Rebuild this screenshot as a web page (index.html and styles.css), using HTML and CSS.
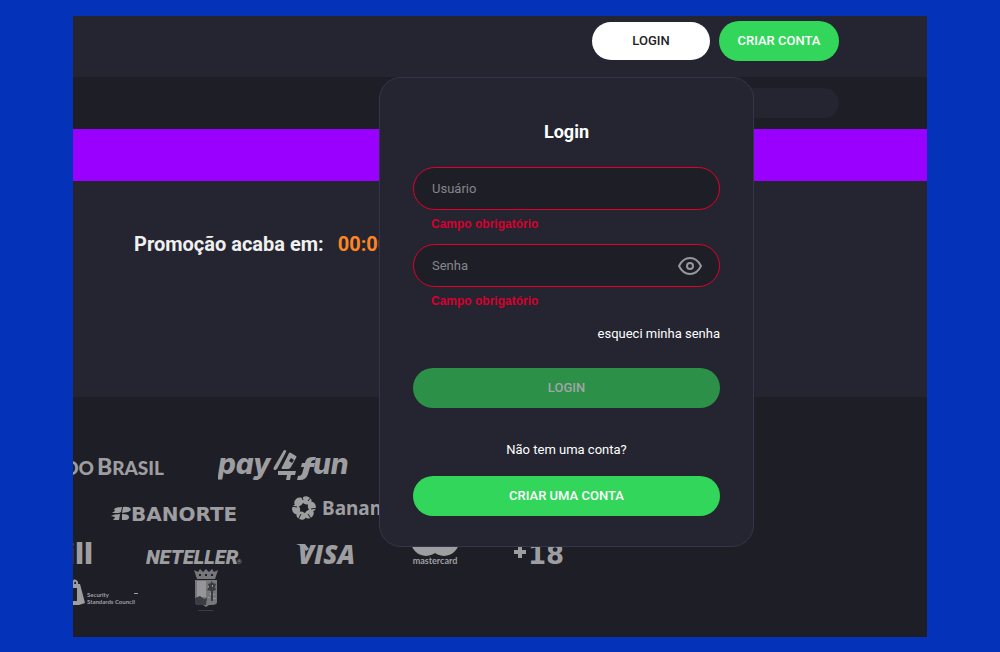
FILE: index.html
```html
<!DOCTYPE html>
<html lang="pt-BR">
<head>
    <meta charset="UTF-8">
    <meta name="viewport" content="width=device-width, initial-scale=1.0">
    <title>Login</title>
    <link rel="stylesheet" href="styles.css">
</head>
<body>

    <div class="page">
        <!-- Top bar -->
        <header class="header">
            <button type="button" class="btn btn-white">LOGIN</button>
            <button type="button" class="btn btn-green btn-top">CRIAR CONTA</button>
        </header>

        <nav class="subnav">
            <input type="search" class="search" aria-label="Buscar">
        </nav>

        <div class="banner"></div>

        <main class="promo">
            <h1 class="promo-title">Promoção acaba em:</h1>
            <span class="promo-time">00:00:00</span>
        </main>

        <!-- Payment logos -->
        <footer class="footer">
            <div class="logos">
                <svg class="logo" width="91" height="44" viewBox="0 0 91 44" role="img" aria-label="Banco do Brasil">
                    <text class="brasil" x="21" y="31" text-anchor="end">DO</text>
                    <text class="brasil" x="91" y="31" text-anchor="end"><tspan class="brasil-big">B</tspan>RASIL</text>
                </svg>
                <svg class="logo" width="132" height="44" viewBox="0 0 132 44" role="img" aria-label="pay4fun">
                    <text class="payfun" x="0" y="30">pay</text>
                    <path d="M66 6q3 0 2 2L59 25q-1 1-3 1-1-1 0-3z"/>
                    <path d="M71 9q1-1 2 0l5 3q1 1 0 2l-5 9q-1 2-3 2h-6q-1-1 0-2z"/>
                    <path class="cut" d="M73 14l3 2-2 3-3-2z"/>
                    <path d="M60 27h18l-1 4h-4l-1 5h-4l1-5h-9z"/>
                    <path d="M98 13h-4q-6 0-7 6h-3l-1 4h3l-2 7q-1 2-4 2l-1 4h3q6 0 8-6l2-7h4l1-4h-4q0-3 4-3z"/>
                    <text class="payfun" x="95" y="30">un</text>
                </svg>
            </div>

            <div class="logos logos-indent">
                <svg class="logo" width="127" height="44" viewBox="0 0 127 44" role="img" aria-label="Banorte">
                    <path d="M3 21q2-2 8-2l-1 5-2 1H1l3-2zM12 19q6-1 8 2 0 2-3 3l-6 1zM0 28q3-2 9-2l-1 6H2q2-2 2-3zM11 26q8 0 7 4-1 2-3 2h-4z"/>
                    <text class="banorte" x="20" y="33">BANORTE</text>
                </svg>
                <svg class="logo" width="120" height="44" viewBox="0 0 120 44" role="img" aria-label="Banamex">
                    <ellipse cx="14" cy="12" rx="5" ry="4" transform="rotate(20 14 20)"/>
                    <ellipse cx="14" cy="12" rx="5" ry="4" transform="rotate(80 14 20)"/>
                    <ellipse cx="14" cy="12" rx="5" ry="4" transform="rotate(140 14 20)"/>
                    <ellipse cx="14" cy="12" rx="5" ry="4" transform="rotate(200 14 20)"/>
                    <ellipse cx="14" cy="12" rx="5" ry="4" transform="rotate(260 14 20)"/>
                    <ellipse cx="14" cy="12" rx="5" ry="4" transform="rotate(320 14 20)"/>
                    <path class="gaps" d="M11 6l2 6M22 8l-4 5M28 20l-7 1M22 32l-4-6M8 32l3-6M1 18l6 1"/>
                    <text class="banamex" x="32" y="27">Banamex</text>
                </svg>
            </div>

            <div class="logos logos-short">
                <svg class="logo" width="19" height="36" viewBox="0 0 19 36" role="img" aria-label="Skrill">
                    <text class="skrill" x="20" y="32" text-anchor="end">Skrill</text>
                </svg>
                <svg class="logo" width="96" height="36" viewBox="0 0 96 36" role="img" aria-label="Neteller">
                    <text class="neteller" x="0" y="32">NETELLER</text>
                    <text class="mark" x="91" y="32">®</text>
                </svg>
                <svg class="logo" width="60" height="36" viewBox="0 0 60 36" role="img" aria-label="Visa">
                    <path d="M0 12h9l4 5-3 2q-3-5-10-7z"/>
                    <text class="visa" x="2" y="32">VISA</text>
                </svg>
                <svg class="logo" width="50" height="36" viewBox="0 0 50 36" role="img" aria-label="mastercard">
                    <circle cx="16" cy="9" r="15"/>
                    <circle cx="34" cy="9" r="15"/>
                    <text class="mastercard" x="25" y="32" text-anchor="middle">mastercard</text>
                </svg>
                <svg class="logo" width="52" height="36" viewBox="0 0 52 36" role="img" aria-label="+18">
                    <path d="M4 14h4v4h4v4H8v4H4v-4H0v-4h4z"/>
                    <text class="adult" x="14" y="32">18</text>
                </svg>
            </div>

            <div class="logos">
                <svg class="logo" width="66" height="44" viewBox="0 0 66 44" role="img" aria-label="PCI Security Standards Council">
                    <path d="M0 16h7l5 19-6 2H0z"/>
                    <path class="cut" d="M0 20h4v13H0z"/>
                    <path class="shackle" d="M0 16q1-6 4-2v4"/>
                    <text class="pci" x="14" y="29">Security</text>
                    <text class="pci" x="14" y="36">Standards Council</text>
                    <path d="M61 25h4v1h-4z"/>
                </svg>
                <svg class="logo" width="26" height="44" viewBox="0 0 26 44" role="img" aria-label="Brasão">
                    <path class="crest" d="M1 2l4 2 2-3 3 3 3-3 3 3 3-3 2 3 4-2-3 9H4z"/>
                    <path class="cut" d="M6 6h2v2H6zM12 6h2v2h-2zM18 6h2v2h-2z"/>
                    <path class="crest" d="M2 12h22v22q0 3-5 3h-3l-3 2-3-2H7q-5 0-5-3z"/>
                    <path class="crest-light" d="M4 13h9v16H4z"/>
                    <path class="crest-dark" d="M2 30l5-2 4 3 3-1-1 7H7q-5 0-5-3zM18 13l2 2 3 1-1 3 1 3-3 1v10h-2V23l-4-1 2-3-1-3 3-1z"/>
                    <path class="crest-light" d="M17 25h1v2h-1zM20 26h2v1h-2zM15 29h2v1h-2zM20 30h3v1h-3zM15 18h1v1h-1zM19 17h1v2h-1z"/>
                    <path class="crest-dark" d="M5 42h15v1H5z"/>
                </svg>
            </div>
        </footer>

        <!-- Login modal -->
        <form class="modal" novalidate>
            <h2 class="modal-title">Login</h2>

            <div class="field">
                <input type="text" id="user" class="field-input" placeholder="Usuário" aria-label="Usuário" aria-describedby="user-error">
            </div>
            <p class="error" id="user-error">Campo obrigatório</p>

            <div class="field">
                <input type="password" id="password" class="field-input" placeholder="Senha" aria-label="Senha" aria-describedby="password-error">
                <button type="button" class="eye" aria-label="Mostrar senha">
                    <svg width="24" height="20" viewBox="0 0 24 20">
                        <path d="M1 10Q5 2 12 2t11 8q-4 8-11 8T1 10z"/>
                        <circle cx="12" cy="10" r="3"/>
                    </svg>
                </button>
            </div>
            <p class="error" id="password-error">Campo obrigatório</p>

            <a href="#" class="forgot">esqueci minha senha</a>
            <button type="submit" class="btn btn-submit" disabled>LOGIN</button>

            <p class="no-account">Não tem uma conta?</p>
            <button type="button" class="btn btn-green">CRIAR UMA CONTA</button>
        </form>
    </div>

</body>
</html>
```
FILE: styles.css
```css
/* Reset and Base Styles */
* {
    margin: 0;
    padding: 0;
    box-sizing: border-box;
}

body {
    font-family: Roboto, "Liberation Sans", sans-serif;
    font-size: 13px;
    color: #fff;
    background-color: #0433ba;
    display: flex;
    min-height: 100vh;
    padding: 16px 73px 15px;
}

.page {
    position: relative;
    flex: 1;
    min-width: 0;
    display: flex;
    flex-direction: column;
    background-color: #242530;
}

/* Buttons */
.btn {
    height: 40px;
    padding-bottom: 2px;
    border: none;
    border-radius: 20px;
    font-family: inherit;
    font-size: 13px;
    font-weight: 500;
    color: #fff;
    cursor: pointer;
}

.btn-green {
    background-color: #32d65b;
}

.btn-white {
    width: 118px;
    height: 38px;
    background-color: #fff;
    color: #1e1e26;
}

.btn-top {
    width: 120px;
}

.btn-submit {
    margin-top: 24px;
    background-color: #2d9048;
    color: #a2a5a8;
    cursor: default;
}

/* Header */
.header {
    display: flex;
    align-items: center;
    justify-content: flex-end;
    gap: 9px;
    height: 61px;
    padding: 0 88px 11px;
}

.subnav {
    display: flex;
    align-items: center;
    justify-content: flex-end;
    height: 52px;
    padding: 0 88px;
    background-color: #1e1e26;
}

.search {
    width: 240px;
    height: 30px;
    padding: 0 16px;
    border: none;
    border-radius: 15px;
    background-color: #242530;
    color: #fff;
}

.banner {
    height: 52px;
    background-color: #9900ff;
}

/* Promotion */
.promo {
    display: flex;
    align-items: flex-start;
    gap: 14px;
    height: 216px;
    padding: 51px 61px;
    font-size: 20px;
    line-height: 24px;
}

.promo-title {
    font-size: 20px;
    font-weight: 700;
    color: #f0f0f0;
}

.promo-time {
    font-weight: 700;
    color: #ff8522;
}

/* Footer */
.footer {
    flex: 1;
    padding: 47px 0 24px;
    background-color: #1e1e26;
}

.logos {
    display: flex;
    gap: 54px;
    height: 44px;
}

.logos-indent {
    gap: 52px;
    padding-left: 38px;
}

.logos-short {
    height: 36px;
}

.logo {
    flex-shrink: 0;
    overflow: hidden;
    fill: #9e9ea1;
}

.cut {
    fill: #1e1e26;
}

.brasil {
    font: 900 19px Lato, sans-serif;
}

.brasil-big {
    font-size: 23px;
}

.payfun {
    font: italic 800 28px Inter, sans-serif;
}

.banorte {
    font: 700 20px "DejaVu Sans", sans-serif;
}

.gaps {
    stroke: #1e1e26;
    stroke-width: 1px;
}

.banamex {
    font: 700 19px "Noto Sans", sans-serif;
}

.skrill {
    font: 800 28px "Open Sans", sans-serif;
}

.neteller {
    font: italic 900 20px Roboto, sans-serif;
}

.mark {
    font: 6px Roboto, sans-serif;
}

.visa {
    font: italic 800 26px "Open Sans", sans-serif;
}

.mastercard {
    font: 700 9px Lato, sans-serif;
}

.adult {
    font: 700 26px "DejaVu Sans", sans-serif;
}

.pci {
    font: 700 6px Lato, sans-serif;
}

.shackle {
    fill: none;
    stroke: #9e9ea1;
    stroke-width: 2px;
}

.crest {
    fill: #77777b;
}

.crest-light {
    fill: #96969a;
}

.crest-dark {
    fill: #3c3c43;
}

/* Login Modal */
.modal {
    position: absolute;
    top: 61px;
    right: 173px;
    width: 375px;
    display: flex;
    flex-direction: column;
    padding: 42px 33px 30px;
    border: 1px solid #33364a;
    border-radius: 22px;
    background-color: #242530;
}

.modal-title {
    margin-bottom: 23px;
    font-size: 18px;
    font-weight: 700;
    line-height: 24px;
    text-align: center;
}

.field {
    display: flex;
    align-items: center;
    height: 43px;
    padding: 0 17px 0 18px;
    border: 1px solid #e4002b;
    border-radius: 22px;
    background-color: #1e1e26;
}

.field-input {
    flex: 1;
    min-width: 0;
    border: none;
    outline: none;
    background: none;
    font-family: inherit;
    font-size: 13px;
    color: #fff;
}

.field-input::placeholder {
    color: #85868c;
}

.eye {
    display: flex;
    border: none;
    background: none;
    cursor: pointer;
}

.eye svg {
    fill: none;
    stroke: #96979c;
    stroke-width: 2px;
}

.error {
    margin: 6px 18px 12px;
    font-family: "Liberation Sans", sans-serif;
    font-size: 12px;
    font-weight: 700;
    line-height: 16px;
    color: #d60030;
}

.forgot {
    align-self: flex-end;
    margin-top: 3px;
    line-height: 20px;
    color: #fff;
    text-decoration: none;
}

.no-account {
    margin: 32px 0 16px;
    line-height: 20px;
    text-align: center;
}
```
